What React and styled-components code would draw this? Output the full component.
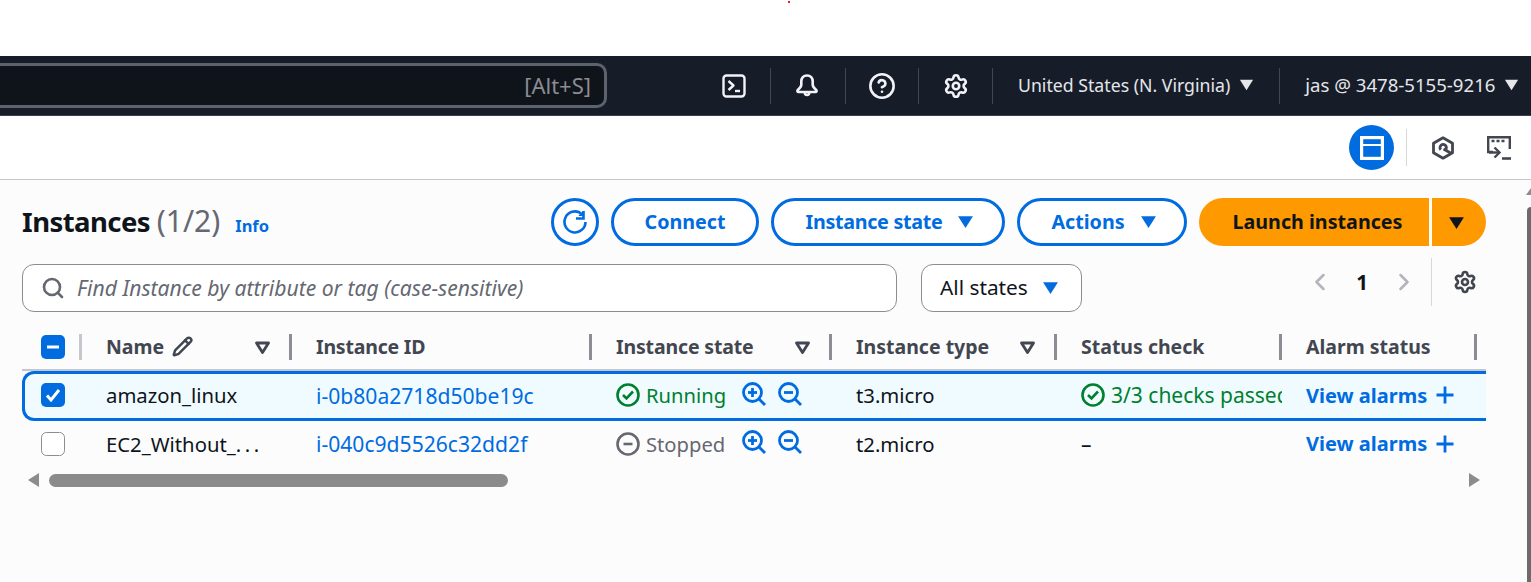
import React from "react"
import styled, { createGlobalStyle } from "styled-components"
import { ChevronLeft, ChevronRight, CircleHelp, Pencil, Search, Settings } from "lucide-react"

const GlobalStyle = createGlobalStyle`
  html, body {
    margin: 0;
    padding: 0;
    overflow: hidden;
    background: #fff;
  }
  * {
    box-sizing: border-box;
  }
`

const Page = styled.div`
  position: relative;
  display: flex;
  flex-direction: column;
  height: 582px;
  font-family: "Noto Sans", sans-serif;
  font-size: 20.5px;
  color: #0f141a;
`

const TopGap = styled.div`
  position: relative;
  height: 56px;
  flex: none;
  background: #fff;
`

const RedDot = styled.span`
  position: absolute;
  left: 788px;
  top: 1px;
  width: 2px;
  height: 2px;
  background: #e8202a;
`

const NavBar = styled.header`
  display: flex;
  align-items: center;
  height: 60px;
  flex: none;
  background: #161d28;
  border-bottom: 1px solid #3a4049;
  color: #e4e6ea;
`

const SearchShortcut = styled.div`
  display: flex;
  align-items: center;
  justify-content: flex-end;
  width: 607px;
  height: 45px;
  margin-top: -1px;
  padding: 0 13px 1px 0;
  background: #0f141a;
  border: 3px solid #5d626c;
  border-left: 0;
  border-radius: 0 10px 10px 0;
  color: #8c8c94;
  font-size: 22px;
`

const NavIcons = styled.div`
  display: flex;
  align-items: center;
  margin-left: 115px;
`

const NavIconCell = styled.div`
  display: flex;
  align-items: center;
  justify-content: center;
  width: ${p => p.$width}px;
  height: 36px;
  border-right: 1px solid #424650;
  padding-right: ${p => p.$pad || 0}px;
`

const NavMenu = styled.div`
  display: flex;
  align-items: center;
  gap: 9px;
  height: 36px;
  font-size: ${p => p.$size}px;
  white-space: nowrap;
  padding: 0 ${p => p.$right}px 2px ${p => p.$left}px;
  border-right: ${p => (p.$divider ? "1px solid #424650" : "0")};
`

const ToolBar = styled.div`
  display: flex;
  align-items: center;
  justify-content: flex-end;
  gap: 32px;
  height: 64px;
  flex: none;
  padding-right: 20px;
  background: #fff;
  border-bottom: 1px solid #c6c6cd;
`

const PanelGroup = styled.div`
  display: flex;
  align-items: center;
`

const PanelToggle = styled.div`
  display: flex;
  align-items: center;
  justify-content: center;
  width: 45px;
  height: 45px;
  border-radius: 50%;
  background: #006ce0;
`

const ToolDivider = styled.span`
  width: 1px;
  height: 37px;
  margin: 0 24px 0 12px;
  background: #d5d7db;
`

const Content = styled.main`
  position: relative;
  flex: 1;
  padding: 18px 45px 0 22px;
  background: #fcfcfd;
`

const HeaderRow = styled.div`
  display: flex;
  align-items: center;
  height: 48px;
`

const Title = styled.h1`
  margin: 0;
  padding-bottom: 3px;
  font-size: 27.5px;
  line-height: 45px;
  font-weight: 700;
  letter-spacing: -0.55px;
  white-space: nowrap;
`

const Count = styled.span`
  font-size: 30px;
  font-weight: 400;
  letter-spacing: 0;
  color: #656871;
`

const InfoLink = styled.a`
  margin: 6px 0 0 15px;
  font-size: 16.5px;
  font-weight: 700;
  color: #006ce0;
`

const Actions = styled.div`
  display: flex;
  align-items: center;
  gap: 12px;
  margin-left: auto;
`

const OutlineButton = styled.button`
  display: flex;
  align-items: center;
  justify-content: center;
  gap: 15px;
  width: ${p => p.$width}px;
  height: 48px;
  padding: 0 0 ${p => (p.$icon ? 0 : 2)}px ${p => p.$shift || 0}px;
  background: #fff;
  border: 3px solid #006ce0;
  border-radius: 24px;
  color: #006ce0;
  font-family: inherit;
  font-size: 19.7px;
  font-weight: 700;
  letter-spacing: ${p => p.$tracking || 0}px;
`

const SplitButton = styled.div`
  display: flex;
  gap: 3px;
`

const LaunchButton = styled.button`
  display: flex;
  align-items: center;
  justify-content: center;
  width: ${p => p.$width}px;
  height: 48px;
  padding: ${p => (p.$caret ? "0 6px 0 0" : "0 0 2px 7px")};
  border: 0;
  border-radius: ${p => (p.$caret ? "0 24px 24px 0" : "24px 0 0 24px")};
  background: #ff9900;
  color: #0f141a;
  font-family: inherit;
  font-size: 19.7px;
  font-weight: 700;
`

const FilterRow = styled.div`
  display: flex;
  align-items: center;
  height: 48px;
  margin-top: 18px;
`

const SearchField = styled.div`
  display: flex;
  align-items: center;
  gap: 12px;
  width: 875px;
  height: 48px;
  padding: 0 0 1px 18px;
  background: #fff;
  border: 1px solid #8c8c94;
  border-radius: 12px;
  color: #656871;
  font-size: 21.1px;
  font-style: italic;
`

const StateSelect = styled.div`
  display: flex;
  align-items: center;
  gap: 14px;
  width: 161px;
  height: 48px;
  margin-left: 24px;
  padding: 0 0 2px 18px;
  background: #fff;
  border: 1px solid #8c8c94;
  border-radius: 12px;
  font-size: 20.8px;
`

const Pager = styled.div`
  display: flex;
  align-items: center;
  margin-left: auto;
  margin-top: -12px;
  margin-right: 9px;
`

const PageNumber = styled.span`
  width: 56px;
  text-align: center;
  font-weight: 700;
`

const PagerDivider = styled.span`
  width: 1px;
  height: 48px;
  margin: 0 21px 0 13px;
  background: #d5d7db;
`

const Table = styled.div`
  margin-top: 12px;
`

const HeaderCells = styled.div`
  display: grid;
  grid-template-columns: 60px 210px 300px 240px 225px 225px 195px;
  align-items: center;
  height: 47px;
  padding-right: 10px;
  border-bottom: 2px solid #c6c6cd;
`

const HeaderCell = styled.div`
  display: flex;
  align-items: center;
  height: 26px;
  padding: 0 18px 0 24px;
  border-right: 3px solid #8c8c94;
  font-size: 19.5px;
  font-weight: 700;
  letter-spacing: ${p => p.$tracking || 0}px;
  color: #424650;
  white-space: nowrap;
`

const SortSlot = styled.span`
  display: flex;
  margin-left: auto;
  margin-top: 2px;
`

const NameEdit = styled.span`
  display: flex;
  margin-left: 8px;
`

const CheckCell = styled.div`
  display: flex;
  align-items: center;
  padding-left: ${p => p.$left}px;
  height: ${p => p.$height}px;
  border-right: ${p => (p.$divider ? "3px solid #c6c6cd" : "0")};
`

const Row = styled.div`
  display: grid;
  grid-template-columns: 57px 210px 300px 240px 225px 225px 217px;
  align-items: center;
  height: ${p => (p.$selected ? 50 : 47)}px;
  padding-bottom: 2px;
  background: ${p => (p.$selected ? "#f0fbff" : "transparent")};
  border: 3px solid ${p => (p.$selected ? "#006ce0" : "transparent")};
  border-right: 0;
  border-radius: 12px 0 0 12px;
`

const Cell = styled.div`
  display: flex;
  align-items: center;
  gap: ${p => p.$gap ?? 6}px;
  padding-left: 24px;
  overflow: hidden;
  white-space: nowrap;
  font-size: ${p => p.$size || 20.3}px;
  color: ${p => p.$color || "#0f141a"};
  font-weight: ${p => p.$weight || 400};
  svg {
    flex: none;
  }
`

const Truncated = styled.span`
  letter-spacing: 3.5px;
`

const StateLabel = styled.span`
  flex: none;
  width: 80px;
`

const CheckLabel = styled.span`
  flex: none;
`

const Zooms = styled.span`
  display: flex;
  align-items: center;
  gap: 12px;
  margin-left: 10px;
  margin-top: -3px;
`

const ScrollTrack = styled.div`
  display: flex;
  align-items: center;
  justify-content: space-between;
  height: 14px;
  margin: 5px 6px 0 6px;
`

const ScrollThumb = styled.div`
  width: 459px;
  height: 13px;
  margin-left: 10px;
  margin-right: auto;
  border-radius: 7px;
  background: #8b8b8b;
`

const PageScrollBar = styled.div`
  position: absolute;
  top: 0;
  right: 0;
  bottom: 0;
  width: 4px;
`

const PageScrollArrow = styled.span`
  position: absolute;
  top: 8px;
  left: -1px;
  width: 0;
  height: 0;
  border-left: 5px solid transparent;
  border-right: 5px solid transparent;
  border-bottom: 7px solid #8c8c8c;
`

const PageScrollThumb = styled.span`
  position: absolute;
  top: 27px;
  left: 0;
  right: 0;
  bottom: 0;
  border-radius: 5px 0 0 0;
  background: #6b6b6b;
`

const Caret = ({ color = "#006ce0", size = 17 }) => (
  <svg width={size} height={size} viewBox="0 0 16 16">
    <path d="M1 3h14L8 14z" fill={color} />
  </svg>
)

const SortCaret = () => (
  <svg width="17" height="16" viewBox="0 0 17 16" fill="none" stroke="#424650" strokeWidth="2.800">
    <path d="M2.500 3h12L8.500 12.500z" strokeLinejoin="round" />
  </svg>
)

const CheckBox = ({ state }) => {
  const filled = state !== "off"
  return (
    <svg width="24" height="24" viewBox="0 0 24 24">
      <rect
        x={filled ? 0 : 0.5}
        y={filled ? 0 : 0.5}
        width={filled ? 24 : 23}
        height={filled ? 24 : 23}
        rx="5"
        fill={filled ? "#006ce0" : "#fff"}
        stroke={filled ? "none" : "#8c8c94"}
      />
      {state === "some" && <path d="M6 12h12" stroke="#fff" strokeWidth="3" />}
      {state === "on" && <path d="M6 12.500l4 4.500 8-10" fill="none" stroke="#fff" strokeWidth="3" />}
    </svg>
  )
}

const TerminalIcon = () => (
  <svg width="24" height="24" viewBox="0 0 24 24" fill="none" stroke="#f3f3f7" strokeWidth="2.400">
    <rect x="1.500" y="1.500" width="21" height="21" rx="3" />
    <path d="M6.500 7l5 4.500-5 4.500" strokeLinejoin="round" />
    <path d="M13 17h5" />
  </svg>
)

const BellIcon = () => (
  <svg width="24" height="24" viewBox="0 0 24 24" fill="none" stroke="#f3f3f7" strokeWidth="2.600" strokeLinejoin="round">
    <path d="M12 1.500c-3.600 0-5.700 2.600-5.700 6v3.300c0 2-1.400 3.400-3.500 5.200-.8.8-.4 2 .7 2h17c1.100 0 1.500-1.200.7-2-2.100-1.800-3.500-3.200-3.500-5.200V7.500c0-3.400-2.100-6-5.700-6z" />
    <path d="M9.800 18.500c0 3.300 4.400 3.300 4.400 0" />
  </svg>
)

const PanelIcon = () => (
  <svg width="24" height="24" viewBox="0 0 24 24" fill="none" stroke="#fff">
    <rect x="1.600" y="1.600" width="20.800" height="20.800" strokeWidth="3.200" />
    <path d="M3 9h18" strokeWidth="2" />
  </svg>
)

const HexIcon = () => (
  <svg width="24" height="24" viewBox="0 0 24 24" fill="none" stroke="#424650" strokeWidth="2.800" strokeLinejoin="round">
    <path d="M12 1.800l9.500 5.500v9.400L12 22.200l-9.500-5.500V7.300z" />
    <path d="M9.800 13.800a3.200 3.200 0 1 1 4.600 .2" />
    <path d="M12.500 13l8 4.500" />
  </svg>
)

const ShellIcon = () => (
  <svg width="24" height="24" viewBox="0 0 24 24" fill="none" stroke="#424650" strokeWidth="2.400">
    <path d="M6 16H1.200V1.200h21.600V13" />
    <path d="M4.500 5h3M9.500 5h3M14.500 5h3" strokeWidth="2.400" />
    <path d="M7.500 11.500l5 5-5 5" />
    <path d="M2 16.500h10" />
    <path d="M15 22.500h9" strokeWidth="2.600" />
  </svg>
)

const RefreshIcon = () => (
  <svg width="24" height="24" viewBox="0 0 24 24" fill="none" stroke="#006ce0" strokeWidth="2.600">
    <path d="M22.500 12A10.500 10.500 0 1 1 18 3.300" />
    <path d="M20.500 1v7.500h-7.500" />
    <path d="M16 5.500h3.500V2z" fill="#006ce0" strokeWidth="1" />
  </svg>
)

const StatusIcon = ({ color, kind }) => (
  <svg width="24" height="24" viewBox="0 0 24 24" fill="none" stroke={color} strokeWidth="2.600">
    <circle cx="12" cy="12" r="10.500" />
    {kind === "ok" ? <path d="M7 12l3.500 3.500L17 8.500" /> : <path d="M7.500 12h9" />}
  </svg>
)

const ZoomIcon = ({ plus }) => (
  <svg width="24" height="24" viewBox="0 0 24 24" fill="none" stroke="#006ce0" strokeWidth="2.800">
    <circle cx="10.500" cy="10.500" r="9" />
    <path d="M17 17l6 6" />
    <path d="M6 10.500h9" />
    {plus && <path d="M10.500 6v9" />}
  </svg>
)

const PlusIcon = () => (
  <svg width="20" height="20" viewBox="0 0 20 20" fill="none" stroke="#006ce0" strokeWidth="2.800">
    <path d="M10 1.500v17M1.500 10h17" />
  </svg>
)

const TriangleLeft = () => (
  <svg width="11" height="14" viewBox="0 0 11 14">
    <path d="M11 0v14L0 7z" fill="#8c8c8c" />
  </svg>
)

const TriangleRight = () => (
  <svg width="11" height="14" viewBox="0 0 11 14">
    <path d="M0 0v14l11-7z" fill="#8c8c8c" />
  </svg>
)

const columns = [
  { label: "Instance ID", tracking: -0.2 },
  { label: "Instance state", sort: true, tracking: -0.15 },
  { label: "Instance type", sort: true },
  { label: "Status check" },
  { label: "Alarm status" },
]

const instances = [
  {
    name: "amazon_linux",
    id: "i-0b80a2718d50be19c",
    state: "Running",
    type: "t3.micro",
    check: "3/3 checks passed",
    selected: true,
  },
  {
    name: "EC2_Without_",
    truncated: true,
    id: "i-040c9d5526c32dd2f",
    state: "Stopped",
    type: "t2.micro",
    check: "–",
    selected: false,
  },
]

const App = () => (
  <Page>
    <GlobalStyle />
    <TopGap>
      <RedDot />
    </TopGap>
    <NavBar>
      <SearchShortcut>[Alt+S]</SearchShortcut>
      <NavIcons>
        <NavIconCell $width={49} $pad={24}><TerminalIcon /></NavIconCell>
        <NavIconCell $width={75} $pad={2}><BellIcon /></NavIconCell>
        <NavIconCell $width={73}><CircleHelp size={28} color="#f3f3f7" strokeWidth={2.200} /></NavIconCell>
        <NavIconCell $width={74}><Settings size={26} color="#f3f3f7" strokeWidth={2.400} /></NavIconCell>
      </NavIcons>
      <NavMenu $size={17.700} $left={25} $right={25} $divider>
        United States (N. Virginia) <Caret color="#e4e6ea" size={15} />
      </NavMenu>
      <NavMenu $size={18.600} $left={25} $right={0}>
        jas @ 3478-5155-9216 <Caret color="#e4e6ea" size={15} />
      </NavMenu>
    </NavBar>
    <ToolBar>
      <PanelGroup>
        <PanelToggle><PanelIcon /></PanelToggle>
        <ToolDivider />
        <HexIcon />
      </PanelGroup>
      <ShellIcon />
    </ToolBar>
    <Content>
      <HeaderRow>
        <Title>Instances <Count>(1/2)</Count></Title>
        <InfoLink>Info</InfoLink>
        <Actions>
          <OutlineButton $width={48} $icon><RefreshIcon /></OutlineButton>
          <OutlineButton $width={148}>Connect</OutlineButton>
          <OutlineButton $width={234} $shift={4} $tracking={-0.3}>Instance state <Caret /></OutlineButton>
          <OutlineButton $width={170} $shift={4}>Actions <Caret /></OutlineButton>
          <SplitButton>
            <LaunchButton $width={230}>Launch instances</LaunchButton>
            <LaunchButton $width={54} $caret><Caret color="#0f141a" /></LaunchButton>
          </SplitButton>
        </Actions>
      </HeaderRow>
      <FilterRow>
        <SearchField>
          <Search size={24} color="#656871" strokeWidth={2.600} />
          Find Instance by attribute or tag (case-sensitive)
        </SearchField>
        <StateSelect>All states <Caret /></StateSelect>
        <Pager>
          <ChevronLeft size={28} color="#b4b4bb" strokeWidth={2.200} />
          <PageNumber>1</PageNumber>
          <ChevronRight size={28} color="#b4b4bb" strokeWidth={2.200} />
          <PagerDivider />
          <Settings size={24} color="#424650" strokeWidth={2.600} />
        </Pager>
      </FilterRow>
      <Table>
        <HeaderCells>
          <CheckCell $left={19} $height={26} $divider><CheckBox state="some" /></CheckCell>
          <HeaderCell>
            Name
            <NameEdit><Pencil size={21} color="#424650" strokeWidth={2.800} /></NameEdit>
            <SortSlot><SortCaret /></SortSlot>
          </HeaderCell>
          {columns.map(col => (
            <HeaderCell key={col.label} $tracking={col.tracking}>
              {col.label}
              {col.sort && <SortSlot><SortCaret /></SortSlot>}
            </HeaderCell>
          ))}
        </HeaderCells>
        {instances.map(item => {
          const ok = item.state === "Running"
          return (
            <Row key={item.id} $selected={item.selected}>
              <CheckCell $left={16} $height={24}>
                <CheckBox state={item.selected ? "on" : "off"} />
              </CheckCell>
              <Cell>
                <span>{item.name}{item.truncated && <Truncated>...</Truncated>}</span>
              </Cell>
              <Cell $color="#006ce0" $size={21.100}>{item.id}</Cell>
              <Cell $color={ok ? "#00802f" : "#656871"} $size={20.200}>
                <StatusIcon color={ok ? "#00802f" : "#656871"} kind={ok ? "ok" : "stop"} />
                <StateLabel>{item.state}</StateLabel>
                <Zooms>
                  <ZoomIcon plus />
                  <ZoomIcon />
                </Zooms>
              </Cell>
              <Cell>{item.type}</Cell>
              <Cell $color={ok ? "#00802f" : "#0f141a"} $size={21}>
                {ok && <StatusIcon color="#00802f" kind="ok" />}
                <CheckLabel>{item.check}</CheckLabel>
              </Cell>
              <Cell $color="#006ce0" $weight={700} $size={20} $gap={8}>
                View alarms <PlusIcon />
              </Cell>
            </Row>
          )
        })}
        <ScrollTrack>
          <TriangleLeft />
          <ScrollThumb />
          <TriangleRight />
        </ScrollTrack>
      </Table>
      <PageScrollBar>
        <PageScrollArrow />
        <PageScrollThumb />
      </PageScrollBar>
    </Content>
  </Page>
)

export default App
